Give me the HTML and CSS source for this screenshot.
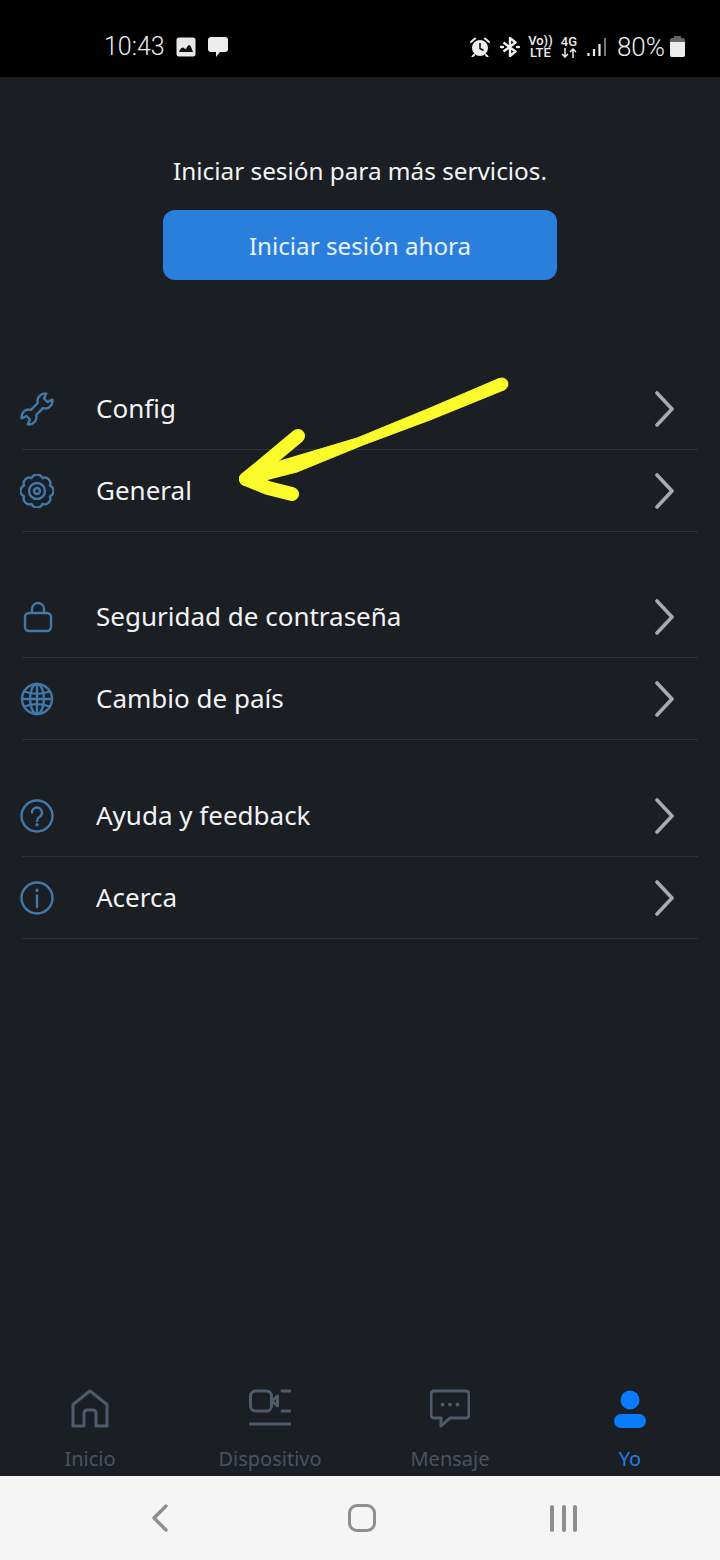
FILE: index.html
```html
<!doctype html>
<html lang="es">
  <head>
    <title>Yo</title>
    <meta name="viewport" content="width=device-width, initial-scale=1">
    <link rel="stylesheet" href="styles.css">
  </head>
  <body>
    <div class="screen">
      <header class="status">
        <div class="status-left">
          <span class="time">10:43</span>
          <svg class="ic-image" viewBox="0 0 20 20"><rect x="0.5" y="0.5" width="19" height="19" rx="2.5" fill="#e8e8e8"/><path d="M3 15c1-3 2.500-4.500 4-4.500 1 0 1.500 1.500 2.500 1.500S11.500 8 13 8s3 3.500 4 7z" fill="#111"/></svg>
          <svg class="ic-chat" viewBox="0 0 20 20"><path d="M3 0h14a3 3 0 0 1 3 3v9a3 3 0 0 1-3 3h-5l-4 5v-5H3a3 3 0 0 1-3-3V3a3 3 0 0 1 3-3z" fill="#ececec"/></svg>
        </div>
        <div class="status-right">
          <svg class="ic-alarm" viewBox="0 0 20 20"><circle cx="10" cy="11" r="8" fill="#ececec"/><path d="M10 6v5.500l3.500 2" fill="none" stroke="#111" stroke-width="1.600"/><path d="M1 5l4-3.500M19 5l-4-3.500M4 18l-1.500 1.500M16 18l1.500 1.500" stroke="#ececec" stroke-width="2" stroke-linecap="round"/></svg>
          <svg class="ic-bt" viewBox="0 0 20 20"><path d="M3.500 5.500l12 9L10 19V1l5.500 4.500-12 9" fill="none" stroke="#ececec" stroke-width="2.400" stroke-linejoin="round"/><path d="M1 10h2M17 10h2" stroke="#ececec" stroke-width="2.400" stroke-linecap="round"/></svg>
          <span class="net net-volte"><span>Vo))</span><span>LTE</span></span>
          <span class="net net-4g">
            <span>4G</span>
            <svg class="ic-updown" viewBox="0 0 16 10"><path d="M4 0v9M1 6l3 3 3-3M12 10V1M9 4l3-3 3 3" fill="none" stroke="#ececec" stroke-width="1.500"/></svg>
          </span>
          <svg class="ic-signal" viewBox="0 0 20 20"><path d="M1.500 16v3M7 12v7M12.500 7v12" stroke="#ececec" stroke-width="2.200"/><path d="M18 1v18" stroke="#777" stroke-width="2"/></svg>
          <span class="batt-text">80%</span>
          <span class="batt"><span class="batt-cap"></span><span class="batt-body"><span class="batt-fill"></span></span></span>
        </div>
      </header>

      <main class="content">
        <section class="login">
          <p class="login-text">Iniciar sesión para más servicios.</p>
          <button class="login-btn">Iniciar sesión ahora</button>
        </section>

        <ul class="group group-first">
          <li class="row">
            <svg class="row-icon" viewBox="0 0 34 34"><path d="M26.300 1.600L24 6.500 27.500 10l4.900-2.300A7.500 7.500 0 0 1 23 16.200L16.200 23A7.500 7.500 0 0 1 7.700 32.400L10 27.500 6.500 24l-4.900 2.300A7.500 7.500 0 0 1 11 17.800L17.800 11A7.500 7.500 0 0 1 26.300 1.600z"/></svg>
            <span class="row-label">Config</span>
            <svg class="row-arrow" viewBox="0 0 24 36"><path d="M4 2l15 16L4 34"/></svg>
          </li>
          <li class="row">
            <svg class="row-icon" viewBox="0 0 34 34"><path d="M29.930 11.640A5.800 5.800 0 0 1 29.930 22.360 5.800 5.800 0 0 1 22.360 29.930 5.800 5.800 0 0 1 11.640 29.930 5.800 5.800 0 0 1 4.070 22.360 5.800 5.800 0 0 1 4.070 11.640 5.800 5.800 0 0 1 11.640 4.070 5.800 5.800 0 0 1 22.360 4.070 5.800 5.800 0 0 1 29.930 11.640z"/><circle cx="17" cy="17" r="8"/><circle cx="17" cy="17" r="3"/></svg>
            <span class="row-label">General</span>
            <svg class="row-arrow" viewBox="0 0 24 36"><path d="M4 2l15 16L4 34"/></svg>
          </li>
        </ul>

        <ul class="group">
          <li class="row">
            <svg class="row-icon" viewBox="0 0 34 34"><rect x="5" y="13" width="26" height="18" rx="4"/><path d="M12 13V9a6 6 0 0 1 12 0v4"/></svg>
            <span class="row-label">Seguridad de contraseña</span>
            <svg class="row-arrow" viewBox="0 0 24 36"><path d="M4 2l15 16L4 34"/></svg>
          </li>
          <li class="row">
            <svg class="row-icon" viewBox="0 0 34 34"><circle cx="17" cy="17" r="15"/><ellipse cx="17" cy="17" rx="7" ry="15"/><path d="M17 2v30M2 17h30M4.500 9.500c8 3 17 3 25 0M4.500 24.500c8-3 17-3 25 0"/></svg>
            <span class="row-label">Cambio de país</span>
            <svg class="row-arrow" viewBox="0 0 24 36"><path d="M4 2l15 16L4 34"/></svg>
          </li>
        </ul>

        <ul class="group group-last">
          <li class="row">
            <svg class="row-icon" viewBox="0 0 34 34"><circle cx="17" cy="17" r="15.500"/><path d="M12 13.500a5 5 0 1 1 8 4c-2 1.500-3 2-3 4.500"/><path class="dot" d="M17 25.500v.5"/></svg>
            <span class="row-label">Ayuda y feedback</span>
            <svg class="row-arrow" viewBox="0 0 24 36"><path d="M4 2l15 16L4 34"/></svg>
          </li>
          <li class="row">
            <svg class="row-icon" viewBox="0 0 34 34"><circle cx="17" cy="17" r="15.500"/><path d="M17 14.500V26"/><path class="dot" d="M17 9v.5"/></svg>
            <span class="row-label">Acerca</span>
            <svg class="row-arrow" viewBox="0 0 24 36"><path d="M4 2l15 16L4 34"/></svg>
          </li>
        </ul>
      </main>

      <nav class="tabs">
        <a class="tab">
          <svg class="tab-icon" viewBox="0 0 40 40"><path d="M3 37V15.500L20 2l17 13.500V37H26V24a3 3 0 0 0-3-3h-6a3 3 0 0 0-3 3v13z"/></svg>
          <span>Inicio</span>
        </a>
        <a class="tab">
          <svg class="tab-icon tab-icon-wide" viewBox="0 0 42 40"><rect x="1.500" y="2" width="21" height="20" rx="5"/><path d="M23 12l5.500-5v10zM33 2h8M33 22h8"/><path d="M1 35h41"/></svg>
          <span>Dispositivo</span>
        </a>
        <a class="tab">
          <svg class="tab-icon" viewBox="0 0 40 40"><path d="M4 2h32a3 3 0 0 1 3 3v21a3 3 0 0 1-3 3H20l-9 8v-8H4a3 3 0 0 1-3-3V5a3 3 0 0 1 3-3z"/><path class="dot" d="M12.500 15.500v.1M20 15.500v.1M27.500 15.500v.1"/></svg>
          <span>Mensaje</span>
        </a>
        <a class="tab tab-active">
          <svg class="tab-icon" viewBox="0 0 40 40"><circle cx="20" cy="11" r="9.500"/><rect x="4" y="25" width="32" height="14" rx="7"/></svg>
          <span>Yo</span>
        </a>
      </nav>

      <footer class="sysnav">
        <svg class="sys-back" viewBox="0 0 18 28"><path d="M15 2L3 14l12 12"/></svg>
        <span class="sys-home"></span>
        <span class="sys-recent"><i></i><i></i><i></i></span>
      </footer>

      <!-- hand drawn arrow on top of the screenshot -->
      <svg class="scribble" viewBox="0 0 720 1560">
        <circle class="s-fill" cx="502" cy="384" r="6"/>
        <path class="s-fill" d="M499 378.500L430 408 357 438 280 461 250 472 250 484 297 472 363 445 430 420 505 389.500z"/>
        <path class="s-barb" d="M298 436L262 466 246 479"/>
        <path class="s-barb" d="M246 479L268 488 292 494"/>
      </svg>
    </div>
  </body>
</html>
```

FILE: styles.css
```css
* {
    box-sizing: border-box;
}
html, body {
    margin: 0;
    padding: 0;
}
body {
    font-family: "Noto Sans", "Open Sans", sans-serif;
    background: #1b1e23;
}
.screen {
    position: relative;
    width: 720px;
    height: 1560px;
    display: flex;
    flex-direction: column;
    overflow: hidden;
    background: #1b1e23;
}

/* status bar */
.status {
    height: 77px;
    flex: none;
    display: flex;
    justify-content: space-between;
    align-items: center;
    padding: 16px 35px 0 104px;
    background: #000;
    color: #ececec;
}
.status-left, .status-right {
    display: flex;
    align-items: center;
}
.time {
    font-family: Roboto, sans-serif;
    font-weight: 300;
    font-size: 25px;
    width: 72px;
}
.ic-image {
    width: 20px;
    height: 20px;
    margin-right: 12px;
}
.ic-chat {
    width: 20px;
    height: 20px;
}
.ic-alarm, .ic-bt {
    width: 20px;
    height: 20px;
    margin-right: 10px;
}
.net {
    display: flex;
    flex-direction: column;
    align-items: center;
    font-family: Roboto, sans-serif;
    font-weight: 500;
    font-size: 13px;
    line-height: 12px;
    margin-right: 10px;
}
.net-volte {
    width: 21px;
}
.net-4g {
    width: 16px;
}
.ic-updown {
    width: 16px;
    height: 10px;
}
.ic-signal {
    width: 20px;
    height: 20px;
    margin-right: 10px;
}
.batt-text {
    font-family: Roboto, sans-serif;
    font-weight: 300;
    font-size: 26px;
    margin-right: 5px;
}
.batt {
    display: flex;
    flex-direction: column;
    align-items: center;
    width: 15px;
}
.batt-cap {
    width: 7px;
    height: 2px;
    background: #666;
}
.batt-body {
    display: flex;
    flex-direction: column;
    justify-content: flex-end;
    width: 15px;
    height: 19px;
    border-radius: 2px;
    overflow: hidden;
    background: #666;
}
.batt-fill {
    height: 15px;
    background: #ececec;
}

/* login */
.content {
    flex: 1;
}
.login {
    display: flex;
    flex-direction: column;
    align-items: center;
    padding-top: 76px;
}
.login-text {
    margin: 0;
    font-size: 24.3px;
    line-height: 36px;
    color: #f2f3f4;
}
.login-btn {
    width: 394px;
    height: 70px;
    margin-top: 21px;
    border: none;
    border-radius: 12px;
    font-family: inherit;
    font-size: 24.2px;
    color: #e6f1fc;
    background: #2b7fdc;
}

/* menu */
.group {
    list-style: none;
    margin: 44px 22px 0;
    padding: 0;
}
.group-first {
    margin-top: 88px;
}
.group-last {
    margin-top: 35px;
}
.row {
    height: 82px;
    display: flex;
    align-items: center;
    border-bottom: 1px solid #2f3237;
}
.row-icon {
    width: 34px;
    height: 34px;
    flex: none;
    margin: 0 42px 0 -2px;
    fill: none;
    stroke: #4179ab;
    stroke-width: 2.4;
    stroke-linejoin: round;
    stroke-linecap: round;
}
.row-icon .dot {
    stroke-width: 3;
}
.row-label {
    flex: 1;
    padding-bottom: 2px;
    font-size: 26px;
    color: #f2f3f4;
}
.row-arrow {
    width: 24px;
    height: 36px;
    flex: none;
    margin-right: 21px;
    fill: none;
    stroke: #a9abad;
    stroke-width: 3.6;
    stroke-linecap: round;
    stroke-linejoin: round;
}

/* bottom tabs */
.tabs {
    height: 106px;
    flex: none;
    display: flex;
    padding-top: 19px;
}
.tab {
    flex: 1;
    display: flex;
    flex-direction: column;
    align-items: center;
    font-size: 20px;
    line-height: 28px;
    color: #4a5260;
}
.tab-icon {
    width: 40px;
    height: 40px;
    margin-bottom: 16px;
    fill: none;
    stroke: #4f5b6c;
    stroke-width: 3;
    stroke-linejoin: round;
    stroke-linecap: round;
}
.tab-icon-wide {
    width: 42px;
}
.tab-icon .dot {
    stroke-width: 4;
}
.tab-active {
    color: #1f7fe6;
}
.tab-active .tab-icon {
    fill: #0a7bff;
    stroke: none;
}

/* android nav */
.sysnav {
    height: 84px;
    flex: none;
    display: flex;
    justify-content: space-between;
    align-items: center;
    padding: 0 143px 0 151px;
    background: #f5f5f5;
}
.sys-back {
    width: 18px;
    height: 28px;
    fill: none;
    stroke: #8e8e8e;
    stroke-width: 3.4;
    stroke-linecap: round;
    stroke-linejoin: round;
}
.sys-home {
    width: 28px;
    height: 28px;
    margin-left: 4.5px;
    border: 3.5px solid #8e8e8e;
    border-radius: 9px;
}
.sys-recent {
    display: flex;
    gap: 7.5px;
}
.sys-recent i {
    width: 4px;
    height: 27px;
    border-radius: 2px;
    background: #8e8e8e;
}

/* scribble */
.scribble {
    position: absolute;
    top: 0;
    left: 0;
    width: 720px;
    height: 1560px;
    pointer-events: none;
}
.s-fill {
    fill: #fbfb2b;
    stroke: #fbfb2b;
    stroke-width: 1;
    stroke-linejoin: round;
}
.s-barb {
    fill: none;
    stroke: #fbfb2b;
    stroke-width: 14;
    stroke-linecap: round;
    stroke-linejoin: round;
}
```
